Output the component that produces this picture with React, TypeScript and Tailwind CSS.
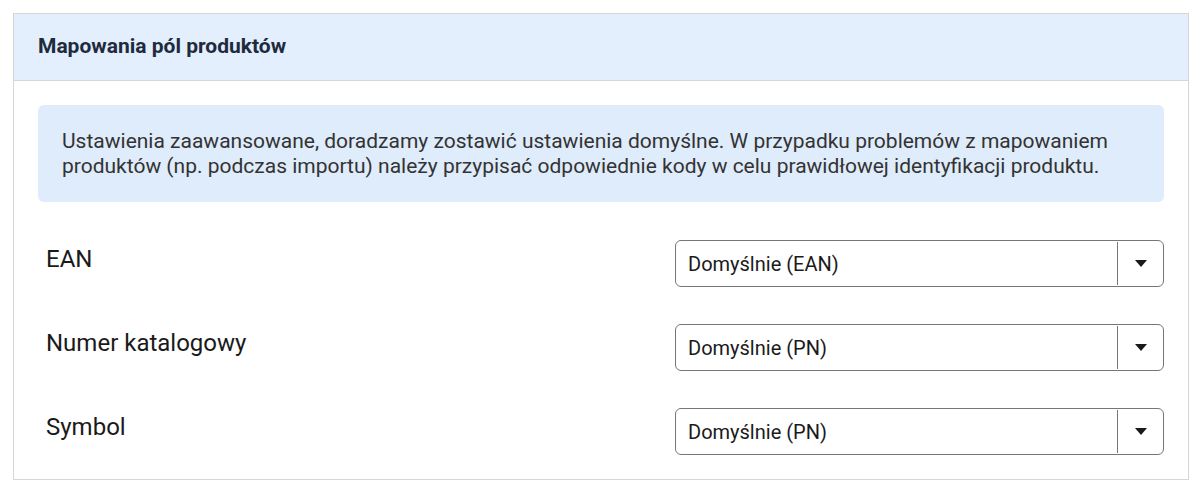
const fields = [
  { label: "EAN", value: "Domyślnie (EAN)" },
  { label: "Numer katalogowy", value: "Domyślnie (PN)" },
  { label: "Symbol", value: "Domyślnie (PN)" },
];

function Select({ value }: { value: string }) {
  return (
    <div className="flex h-[47px] w-[489px] items-stretch rounded-[6px] border border-[#767676] bg-white">
      <div className="flex flex-1 items-center pl-[12px] text-[20px] text-[#1a1a1a]">{value}</div>
      <div className="my-[1px] w-px bg-[#767676]" />
      <div className="flex w-[45px] items-center justify-center">
        <svg width="12" height="7" viewBox="0 0 12 7">
          <path d="M0 0 L12 0 L6 7 Z" fill="#1a1a1a" />
        </svg>
      </div>
    </div>
  );
}

export default function App() {
  return (
    <div className="min-h-[494px] bg-white p-[13px]" style={{ fontFamily: "Roboto, 'Noto Sans', sans-serif" }}>
      <div className="border border-[#d6d6d6]">
        <div className="flex h-[67px] items-center border-b border-[#d6d6d6] bg-[#e3effd] px-[24px]">
          <h2 className="text-[21px] font-bold text-[#1e2b3d]">Mapowania pól produktów</h2>
        </div>
        <div className="px-[24px] pt-[24px] pb-[24px]">
          <div className="rounded-[6px] bg-[#dfecfb] px-[24px] pt-[24px] pb-[23px] text-[21px] leading-[25px] text-[#333]">
            Ustawienia zaawansowane, doradzamy zostawić ustawienia domyślne. W przypadku problemów z mapowaniem
            <br />
            produktów (np. podczas importu) należy przypisać odpowiednie kody w celu prawidłowej identyfikacji produktu.
          </div>
          <div className="mt-[38px] flex flex-col gap-[37px]">
            {fields.map((f) => (
              <div key={f.label} className="flex items-start justify-between">
                <div className="pl-[8px] pt-[5px] text-[24px] leading-[28px] text-[#1a1a1a]">{f.label}</div>
                <Select value={f.value} />
              </div>
            ))}
          </div>
        </div>
      </div>
    </div>
  );
}
